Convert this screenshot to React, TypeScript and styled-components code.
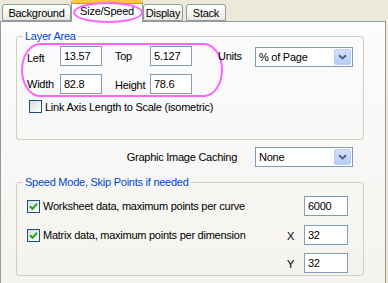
import React from 'react';
import styled, { createGlobalStyle } from 'styled-components';

const GlobalStyle = createGlobalStyle`
  html, body {
    margin: 0;
    padding: 0;
    background: #ece9d8;
  }
  body {
    font-family: "Liberation Sans", Arial, sans-serif;
    font-size: 11px;
    letter-spacing: -0.25px;
    color: #000;
  }
`;

const Dialog = styled.div`
  width: 388px;
  height: 283px;
  overflow: hidden;
  background: #ece9d8;
`;

const TabStrip = styled.div`
  position: relative;
  display: flex;
  align-items: flex-end;
  height: 21px;
  padding-left: 2px;
`;

const Tab = styled.div<{ $w: number; $gap?: number; $active?: boolean }>`
  box-sizing: border-box;
  width: ${(p) => p.$w}px;
  margin-left: ${(p) => p.$gap ?? 0}px;
  height: ${(p) => (p.$active ? 22 : 17)}px;
  margin-bottom: ${(p) => (p.$active ? -1 : 0)}px;
  position: relative;
  z-index: ${(p) => (p.$active ? 1 : 0)};
  display: flex;
  align-items: center;
  justify-content: center;
  border: 1px solid #919b9c;
  border-bottom: ${(p) => (p.$active ? 'none' : '1px solid #919b9c')};
  border-top: ${(p) => (p.$active ? '3px solid #ffc73c' : '1px solid #919b9c')};
  border-radius: 3px 3px 0 0;
  padding-bottom: ${(p) => (p.$active ? 4 : 0)}px;
  background: ${(p) =>
    p.$active ? '#fcfcfe' : 'linear-gradient(#ffffff, #f3f3ef 60%, #e8e7e0)'};
  box-shadow: ${(p) => (p.$active ? 'inset 0 1px 0 #e68b2c' : 'none')};
  white-space: nowrap;
`;

const TabRing = styled.div`
  position: absolute;
  left: 73px;
  top: 2px;
  width: 70px;
  height: 21px;
  box-sizing: border-box;
  border: 2px solid #ff62ff;
  border-radius: 50%;
  z-index: 3;
  pointer-events: none;
`;

const Panel = styled.div`
  box-sizing: border-box;
  width: 386px;
  height: 262px;
  border: 1px solid #919b9c;
  border-bottom: none;
  background: linear-gradient(#fcfcfe, #f4f3ee);
  padding-top: 8px;
`;

const Group = styled.fieldset<{ $top?: number }>`
  box-sizing: border-box;
  width: 348px;
  margin: ${(p) => p.$top ?? 0}px 0 0 15px;
  padding: 0;
  border: 1px solid #d0d0bf;
  border-radius: 3px;
  min-width: 0;
`;

const Legend = styled.legend`
  margin-left: 6px;
  padding: 0 2px;
  line-height: 13px;
  color: #0046d5;
`;

const GroupBody = styled.div<{ $pt: number; $pb: number; $pr?: number }>`
  position: relative;
  padding: ${(p) => p.$pt}px ${(p) => p.$pr ?? 0}px ${(p) => p.$pb}px 10px;
`;

const Highlight = styled.div`
  position: absolute;
  left: 4px;
  top: 0;
  width: 202px;
  height: 54px;
  box-sizing: border-box;
  border: 2px solid #ff62ff;
  border-radius: 19px / 27px;
  pointer-events: none;
`;

const FieldRow = styled.div<{ $mt?: number }>`
  display: flex;
  align-items: center;
  height: 20px;
  margin-top: ${(p) => p.$mt ?? 0}px;
`;

const Label = styled.span<{ $w: number; $ml?: number; $dy?: number }>`
  width: ${(p) => p.$w}px;
  margin-left: ${(p) => p.$ml ?? 0}px;
  position: relative;
  top: ${(p) => p.$dy ?? 0}px;
  white-space: nowrap;
`;

const TextBox = styled.div<{ $w: number }>`
  box-sizing: border-box;
  width: ${(p) => p.$w}px;
  height: 20px;
  border: 1px solid #7f9db9;
  background: #fff;
  padding-left: 3px;
  line-height: 18px;
`;

const Combo = styled.div<{ $dy?: number }>`
  box-sizing: border-box;
  width: 98px;
  height: 20px;
  border: 1px solid #7f9db9;
  background: #fff;
  display: flex;
  align-items: center;
  justify-content: space-between;
  padding: 0 1px 0 3px;
  position: relative;
  top: ${(p) => p.$dy ?? 0}px;
`;

const ComboButton = styled.div`
  box-sizing: border-box;
  width: 17px;
  height: 16px;
  border: 1px solid #bccdf9;
  border-radius: 2px;
  background: linear-gradient(#d3e0fd, #b6cbf8);
  display: flex;
  align-items: center;
  justify-content: center;
`;

const CheckRow = styled.div<{ $ml?: number; $mt?: number }>`
  display: flex;
  align-items: center;
  margin-left: ${(p) => p.$ml ?? 0}px;
  margin-top: ${(p) => p.$mt ?? 0}px;
  flex: 1;
  white-space: nowrap;
`;

const CheckBox = styled.div`
  box-sizing: border-box;
  width: 13px;
  height: 13px;
  margin-right: 3px;
  border: 1px solid #1c5180;
  background: linear-gradient(135deg, #dcdcd7, #ffffff);
  display: flex;
  align-items: center;
  justify-content: center;
`;

const SpeedRow = styled.div<{ $mt?: number }>`
  display: flex;
  align-items: center;
  height: 20px;
  margin-top: ${(p) => p.$mt ?? 0}px;
`;

const AxisLabel = styled.span`
  width: 17px;
  position: relative;
  top: 1px;
`;

const CachingRow = styled.div`
  display: flex;
  align-items: center;
  justify-content: flex-end;
  gap: 18px;
  height: 20px;
  margin: 7px 32px 0 0;
`;

const Chevron = () => (
  <svg width="9" height="6" viewBox="0 0 9 6">
    <path d="M1 1.2 L4.5 4.5 L8 1.2" fill="none" stroke="#4d6185" strokeWidth="2" />
  </svg>
);

const Tick = () => (
  <svg width="9" height="9" viewBox="0 0 9 9">
    <path d="M1 4.2 L3.5 6.8 L8 1.6" fill="none" stroke="#21a121" strokeWidth="2" />
  </svg>
);

const Select = ({ value, dy }: { value: string; dy?: number }) => (
  <Combo $dy={dy}>
    <span>{value}</span>
    <ComboButton>
      <Chevron />
    </ComboButton>
  </Combo>
);

export default function App() {
  return (
    <>
      <GlobalStyle />
      <Dialog>
        <TabStrip>
          <Tab $w={69}>Background</Tab>
          <Tab $w={72} $active>
            Size/Speed
          </Tab>
          <Tab $w={40}>Display</Tab>
          <Tab $w={40} $gap={3}>
            Stack
          </Tab>
          <TabRing />
        </TabStrip>
        <Panel>
          <Group>
            <Legend>Layer Area</Legend>
            <GroupBody $pt={3} $pb={26}>
              <Highlight />
              <FieldRow>
                <Label $w={33} $dy={2}>Left</Label>
                <TextBox $w={42}>13.57</TextBox>
                <Label $w={35} $ml={13}>Top</Label>
                <TextBox $w={42}>5.127</TextBox>
                <Label $w={37} $ml={26}>Units</Label>
                <Select value="% of Page" dy={1} />
              </FieldRow>
              <FieldRow $mt={8}>
                <Label $w={33}>Width</Label>
                <TextBox $w={42}>82.8</TextBox>
                <Label $w={35} $ml={13} $dy={1}>Height</Label>
                <TextBox $w={42}>78.6</TextBox>
              </FieldRow>
              <CheckRow $ml={2} $mt={6}>
                <CheckBox />
                Link Axis Length to Scale (isometric)
              </CheckRow>
            </GroupBody>
          </Group>

          <CachingRow>
            <span>Graphic Image Caching</span>
            <Select value="None" />
          </CachingRow>

          <Group $top={9}>
            <Legend>Speed Mode, Skip Points if needed</Legend>
            <GroupBody $pt={7} $pb={2} $pr={15}>
              <SpeedRow>
                <CheckRow>
                  <CheckBox>
                    <Tick />
                  </CheckBox>
                  Worksheet data, maximum points per curve
                </CheckRow>
                <TextBox $w={44}>6000</TextBox>
              </SpeedRow>
              <SpeedRow $mt={9}>
                <CheckRow>
                  <CheckBox>
                    <Tick />
                  </CheckBox>
                  Matrix data, maximum points per dimension
                </CheckRow>
                <AxisLabel>X</AxisLabel>
                <TextBox $w={44}>32</TextBox>
              </SpeedRow>
              <SpeedRow $mt={8}>
                <CheckRow />
                <AxisLabel>Y</AxisLabel>
                <TextBox $w={44}>32</TextBox>
              </SpeedRow>
            </GroupBody>
          </Group>
        </Panel>
      </Dialog>
    </>
  );
}
